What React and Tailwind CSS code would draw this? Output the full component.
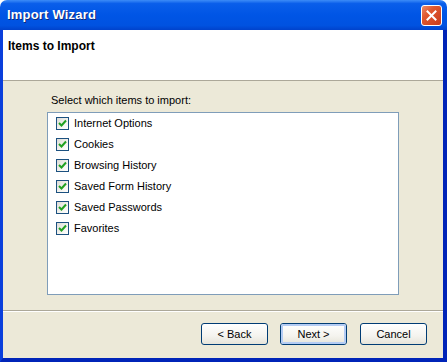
import React from 'react';

const items = [
  'Internet Options',
  'Cookies',
  'Browsing History',
  'Saved Form History',
  'Saved Passwords',
  'Favorites',
];

const CheckBox = () => (
  <div className="w-[13px] h-[13px] border border-[#1C5180] bg-[linear-gradient(135deg,#DCDCD7_0%,#F5F4EF_60%,#FFFFFF_100%)] flex items-center justify-center shrink-0">
    <svg width="9" height="9" viewBox="0 0 9 9">
      <path d="M1 4 L3.5 6.5 L8 1.5" stroke="#21A121" strokeWidth="2" fill="none" />
    </svg>
  </div>
);

const XpButton = ({ label, focused }) => (
  <button className="w-[67px] h-[22px] rounded-[3px] border border-[#003C74] bg-[linear-gradient(180deg,#FFFFFF_0%,#F4F3EE_60%,#E6E4DA_100%)] text-[11px] text-black flex items-center justify-center p-0">
    <span
      className={`w-full h-full rounded-[2px] flex items-center justify-center ${focused ? 'border-2 border-[#B4CCF4]' : ''}`}
    >
      {label}
    </span>
  </button>
);

export default function App() {
  return (
    <div className="w-[447px] h-[362px] flex flex-col bg-white font-['Liberation_Sans',Arial,sans-serif] select-none">
      {/* title bar */}
      <div className="h-[30px] rounded-t-[7px] bg-[linear-gradient(180deg,#3D8CF7_0%,#0A5EEA_12%,#0055E5_50%,#0052E0_85%,#0042CC_100%)] flex items-center justify-between pl-[7px] pr-[5px] shrink-0">
        <span className="text-white font-bold text-[13px] tracking-[0.2px] [text-shadow:1px_1px_0_#0F2A7A]">Import Wizard</span>
        <div className="w-[21px] h-[21px] rounded-[3px] border border-white bg-[linear-gradient(135deg,#E98A6A_0%,#E0582F_35%,#C83B1B_100%)] flex items-center justify-center">
          <svg width="11" height="11" viewBox="0 0 11 11">
            <path d="M1.5 1.5 L9.5 9.5 M9.5 1.5 L1.5 9.5" stroke="white" strokeWidth="2" strokeLinecap="square" />
          </svg>
        </div>
      </div>

      {/* window frame */}
      <div className="flex-1 flex flex-col border-l-[3px] border-r-[4px] border-b-[4px] border-l-[#0A3FDC] border-r-[#0024B8] border-b-[#0024B8]">
        {/* header */}
        <div className="h-[51px] bg-white border-b border-[#ACA899] pl-[5px] pt-[9px] shrink-0">
          <div className="text-[12px] leading-[14px] font-bold text-black">Items to Import</div>
        </div>

        {/* body */}
        <div className="flex-1 bg-[#ECE9D8] flex flex-col pt-[13px]">
          <div className="pl-[48px] text-[11px] leading-[13px] text-black">Select which items to import:</div>
          <div className="ml-[44px] mt-[5px] w-[352px] h-[183px] border border-[#7F9DB9] bg-white pt-[4px] pl-[8px] flex flex-col gap-[8px]">
            {items.map((it) => (
              <div key={it} className="h-[13px] flex items-center gap-[5px]">
                <CheckBox />
                <span className="text-[11px] leading-[13px] text-black">{it}</span>
              </div>
            ))}
          </div>

          <div className="mt-[15px] border-t border-[#ACA899] border-b border-b-white" />

          <div className="mt-[11px] flex justify-end pr-[16px]">
            <XpButton label="< Back" />
            <div className="ml-[12px]">
              <XpButton label="Next >" focused />
            </div>
            <div className="ml-[13px]">
              <XpButton label="Cancel" />
            </div>
          </div>
        </div>
      </div>
    </div>
  );
}
